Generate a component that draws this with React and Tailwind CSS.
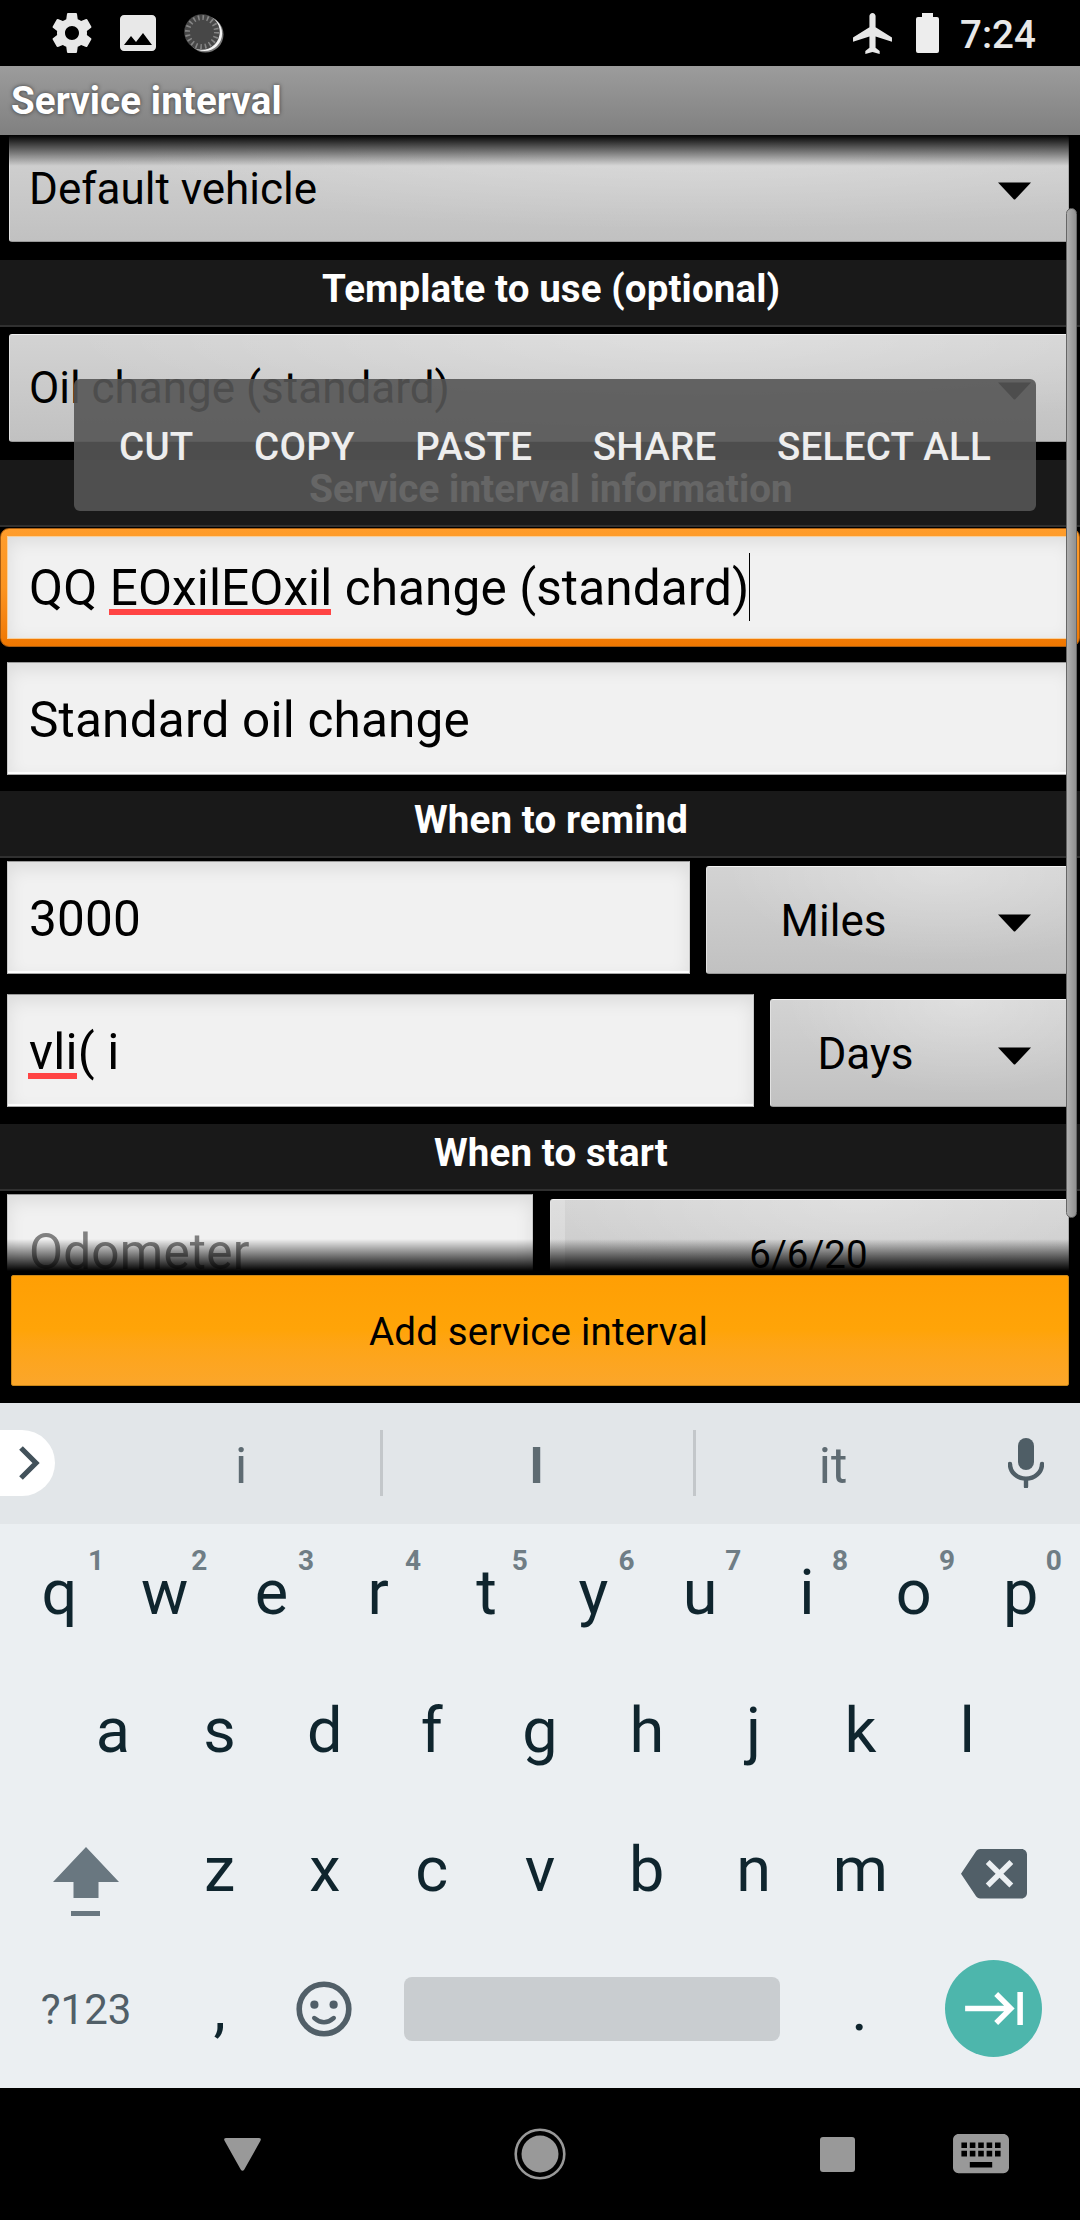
import React from "react";

const Arrow = () => (
  <svg width="33" height="18" viewBox="0 0 33 18" className="shrink-0">
    <path d="M0 0.5H33L17.5 17Q16.5 18 15.5 17Z" fill="#000" />
  </svg>
);

function StatusBar() {
  return (
    <div className="flex h-[66px] items-start bg-black pt-[13px] text-[#e8e8e8]">
      <svg width="40" height="40" viewBox="2 2 20 20" fill="currentColor" className="ml-[52px]">
        <path d="M19.43 12.98c.04-.32.07-.64.07-.98s-.03-.66-.07-.98l2.11-1.65c.19-.15.24-.42.12-.64l-2-3.46c-.12-.22-.39-.3-.61-.22l-2.49 1c-.52-.4-1.08-.73-1.69-.98l-.38-2.65C14.46 2.18 14.25 2 14 2h-4c-.25 0-.46.18-.49.42l-.38 2.65c-.61.25-1.17.59-1.69.98l-2.49-1c-.23-.09-.49 0-.61.22l-2 3.46c-.13.22-.07.49.12.64l2.11 1.65c-.04.32-.07.65-.07.98s.03.66.07.98l-2.11 1.65c-.19.15-.24.42-.12.64l2 3.46c.12.22.39.3.61.22l2.49-1c.52.4 1.08.73 1.69.98l.38 2.65c.03.24.24.42.49.42h4c.25 0 .46-.18.49-.42l.38-2.65c.61-.25 1.17-.59 1.69-.98l2.49 1c.23.09.49 0 .61-.22l2-3.46c.12-.22.07-.49-.12-.64l-2.11-1.65zM12 15.5c-1.93 0-3.5-1.57-3.5-3.5s1.57-3.5 3.5-3.5 3.5 1.57 3.5 3.5-1.57 3.5-3.5 3.5z" />
      </svg>
      <svg width="36" height="36" viewBox="3 3 18 18" fill="currentColor" className="mt-[2px] ml-[28px]">
        <path d="M21 19V5c0-1.1-.9-2-2-2H5c-1.1 0-2 .9-2 2v14c0 1.1.9 2 2 2h14c1.1 0 2-.9 2-2zM8.5 13.5l2.5 3.01L14.5 12l4.5 6H5l3.5-4.5z" />
      </svg>
      <svg width="40" height="40" viewBox="0 0 40 40" className="ml-[28px]">
        <circle cx="21.5" cy="21.5" r="18" fill="#777" />
        <circle cx="20.5" cy="20.5" r="17.6" fill="#f4f4f4" />
        <circle cx="18" cy="19" r="17.8" fill="#474747" />
        <circle cx="18" cy="19" r="14.5" fill="none" stroke="#858585" strokeWidth="5" strokeDasharray="1.6 2.955" />
      </svg>
      <svg width="39" height="41" viewBox="2 2 19 20" fill="currentColor" className="ml-auto">
        <path d="M21 16v-2l-8-5V3.5c0-.83-.67-1.5-1.5-1.5S10 2.67 10 3.5V9l-8 5v2l8-2.5V19l-2 1.5V22l3.5-1 3.5 1v-1.5L13 19v-5.5l8 2.5z" />
      </svg>
      <svg width="23" height="40" viewBox="0 0 23 40" fill="#ededed" className="ml-[24px]">
        <path d="M6 0H17V4H21Q23 4 23 6V38Q23 40 21 40H2Q0 40 0 38V6Q0 4 2 4H6Z" />
      </svg>
      <div className="mr-[42px] ml-[21px] w-[78px] text-[38.5px] leading-[44px] font-medium whitespace-nowrap">7:24</div>
    </div>
  );
}

const Header = ({ children, className = "" }) => (
  <div className={`h-[67px] shrink-0 border-b-2 border-[#303030] bg-[#191919] pl-[22px] text-center text-[38.5px] leading-[58px] font-bold tracking-[0.11px] text-white ${className}`}>
    {children}
  </div>
);

const Spinner = ({ children, className = "" }) => (
  <div className={`flex shrink-0 items-center rounded-[3px] border border-t-[#f2f2f2] border-r-[#aaa] border-b-[#999] border-l-[#e2e2e2] bg-[radial-gradient(ellipse_60%_90%_at_65%_0%,rgba(255,255,255,0.28),transparent),linear-gradient(#d3d3d3,#c1c1c1)] pr-[37px] text-[44px] leading-[52px] text-black ${className}`}>
    {children}
    <div className="pt-[5px]">
      <Arrow />
    </div>
  </div>
);

const Field = ({ children, className = "" }) => (
  <div className={`flex h-[113px] shrink-0 items-center border border-t-[#999] border-r-[#c8c8c8] border-b-[#aaa] border-l-[#c8c8c8] bg-[#f1f1f1] pt-[2px] pl-[21px] text-[49.5px] leading-[58px] tracking-[0.2px] whitespace-nowrap shadow-[inset_0_-2px_1px_#fff,inset_0_6px_18px_rgba(0,0,0,0.09)] ${className}`}>
    {children}
  </div>
);

const Misspelt = ({ children }) => (
  <span className="relative">
    {children}
    <span className="absolute bottom-[2px] left-[-1px] h-[6px] w-full bg-[#ff4444]" />
  </span>
);

function TextMenu() {
  return (
    <div className="absolute top-[244px] left-[74px] flex h-[132px] w-[962px] items-center gap-[60.5px] rounded-[6px] bg-[#555555]/90 pt-[3px] pl-[45px] text-[38.5px] leading-[46px] font-medium tracking-[0.25px] whitespace-nowrap text-white/90">
      <span>CUT</span>
      <span>COPY</span>
      <span>PASTE</span>
      <span>SHARE</span>
      <span>SELECT ALL</span>
    </div>
  );
}

function Form() {
  return (
    <div className="relative flex h-[1136px] flex-col overflow-hidden bg-black">
      <Spinner className="mr-[11px] ml-[9px] h-[107px]">
        <span className="flex-1 pl-[19px]">Default vehicle</span>
      </Spinner>
      <Header className="mt-[18px]">Template to use (optional)</Header>
      <Spinner className="mt-[7px] mr-[11px] ml-[9px] h-[108px]">
        <span className="flex-1 pl-[19px]">Oil change (standard)</span>
      </Spinner>
      <Header className="mt-[18px]">Service interval information</Header>
      <div className="mt-px h-[119px] shrink-0 rounded-[9px] border border-[#a85c10] bg-linear-to-b from-[#ff9d2c] via-[#fb9420] to-[#ef7700] px-[6px] py-[7px]">
        <div className="flex h-[103px] items-center border border-[#f8cf9a] bg-[#f1f1f1] pl-[21px] text-[49.5px] leading-[58px] tracking-[0.1px] whitespace-pre text-black shadow-[inset_0_4px_18px_rgba(0,0,0,0.09)]">
          <span>QQ </span>
          <Misspelt>EOxilEOxil</Misspelt>
          <span> change (standard)</span>
          <span className="-mt-px h-[68px] w-px bg-black" />
        </div>
      </div>
      <Field className="mt-[15px] mr-[7px] ml-[7px] text-black">Standard oil change</Field>
      <Header className="mt-[16px]">When to remind</Header>
      <div className="mt-[3px] flex shrink-0 items-end pr-[11px] pl-[7px]">
        <Field className="w-[683px] text-black">3000</Field>
        <Spinner className="ml-[16px] h-[108px] flex-1">
          <span className="flex-1 pt-[2px] pr-[38px] text-center">Miles</span>
        </Spinner>
      </div>
      <div className="mt-[20px] flex shrink-0 items-end pr-[11px] pl-[7px]">
        <Field className="w-[747px] text-black">
          <Misspelt>vli</Misspelt>
          <span className="whitespace-pre">( i</span>
        </Field>
        <Spinner className="ml-[16px] h-[108px] flex-1">
          <span className="flex-1 pt-[2px] pr-[38px] text-center">Days</span>
        </Spinner>
      </div>
      <Header className="mt-[17px]">When to start</Header>
      <div className="mt-[3px] flex shrink-0 items-end pr-[11px] pl-[7px]">
        <Field className="w-[526px] text-[#808080]">Odometer</Field>
        <div className="ml-[17px] flex h-[108px] flex-1 items-center justify-center rounded-[3px] border border-t-[#f2f2f2] border-r-[#aaa] border-b-[#999] border-l-[#e2e2e2] bg-[linear-gradient(90deg,rgba(255,255,255,0.22)_14px,transparent_14px),radial-gradient(ellipse_60%_90%_at_60%_0%,rgba(255,255,255,0.25),transparent),linear-gradient(#d5d5d5,#c4c4c4)] pt-[4px] pr-[2px] text-[38.5px] leading-[46px] text-black">
          6/6/20
        </div>
      </div>
      <div className="absolute inset-x-0 top-0 h-[31px] bg-linear-to-b from-black to-transparent" />
      <div className="absolute inset-x-0 bottom-0 h-[32px] bg-linear-to-b from-transparent to-black" />
      <div className="absolute top-[73px] right-[3px] h-[1010px] w-[11px] rounded-full border border-[#666] bg-linear-to-r from-[#b0b0b0] to-[#909090]" />
      <TextMenu />
    </div>
  );
}

function Suggestions() {
  return (
    <div className="flex h-[121px] items-center bg-[#e2e6e9] pb-[1px] text-[50px] leading-[58px] text-[#5e6b72]">
      <div className="flex h-[66px] w-[55px] items-center rounded-r-full bg-white pl-[19px]">
        <svg width="21" height="34" viewBox="0 0 21 34" fill="none" stroke="#42515a" strokeWidth="5.2">
          <path d="M2 2L17 17L2 32" />
        </svg>
      </div>
      <div className="ml-[47px] w-[278px] pt-[5px] text-center">i</div>
      <div className="h-[66px] w-[3px] bg-[#c3c7ca]" />
      <div className="w-[310px] pt-[5px] pr-[3px] text-center font-bold">I</div>
      <div className="h-[66px] w-[3px] bg-[#c3c7ca]" />
      <div className="w-[274px] pt-[5px] text-center">it</div>
      <svg width="36" height="50" viewBox="0 0 36 50" className="ml-[38px]">
        <rect x="10" y="0" width="16" height="32" rx="8" fill="#4f5e66" />
        <path d="M2 26a16 14.8 0 0 0 32 0M18 41V48.5" fill="none" stroke="#4f5e66" strokeWidth="4.4" strokeLinecap="round" />
      </svg>
    </div>
  );
}

const Key = ({ children, hint }) => (
  <div className={`relative h-full w-[106.8px] shrink-0 text-center ${"werdfxc".includes(children) ? "pr-[3px]" : ""}`}>
    {children}
    {hint && (
      <span className={`absolute top-[21px] text-[28px] leading-[32px] font-bold text-[#6f7d85] ${hint === "1" ? "left-[82px]" : "left-[78.5px]"}`}>
        {hint}
      </span>
    )}
  </div>
);

function Keyboard() {
  return (
    <div className="flex h-[564px] flex-col bg-[#ebeff2] px-[6px] text-[63px] leading-[138px] text-[#0f252e]">
      <div className="flex h-[138.3px]">
        {"qwertyuiop".split("").map((c, i) => (
          <Key key={c} hint={String((i + 1) % 10)}>{c}</Key>
        ))}
      </div>
      <div className="flex h-[138.3px] px-[53.4px]">
        {"asdfghjkl".split("").map((c) => (
          <Key key={c}>{c}</Key>
        ))}
      </div>
      <div className="flex h-[138.3px] items-center">
        <div className="flex w-[160.2px] justify-center">
          <svg width="66" height="70" viewBox="0 0 66 70" fill="#697780" className="mt-[25px]">
            <path d="M33 0L66 35H45.5V51H20.5V35H0Z" />
            <rect x="18" y="64" width="29" height="5" />
          </svg>
        </div>
        {"zxcvbnm".split("").map((c) => (
          <Key key={c}>{c}</Key>
        ))}
        <div className="flex w-[160.2px] justify-center">
          <svg width="66" height="49.5" viewBox="0 3 24 18" fill="#515f68" className="mt-[9px]">
            <path d="M22 3H7c-.69 0-1.23.35-1.59.88L0 12l5.41 8.11c.36.53.9.89 1.59.89h15c1.1 0 2-.9 2-2V5c0-1.1-.9-2-2-2zm-3 12.59L17.59 17 14 13.41 10.41 17 9 15.59 12.59 12 9 8.41 10.41 7 14 10.59 17.59 7 19 8.41 15.41 12 19 15.59z" />
          </svg>
        </div>
      </div>
      <div className="flex h-[138.3px] items-center pt-[1px]">
        <div className="w-[160.2px] pt-[2px] text-center text-[42px] text-[#515f68]">?123</div>
        <div className="w-[106.8px] text-center">,</div>
        <div className="flex w-[106.8px] justify-center pr-[4px]">
          <svg width="56" height="56" viewBox="-28 -28 56 56" fill="none" stroke="#515f68">
            <circle r="24.8" strokeWidth="5.6" />
            <circle cx="-9.6" cy="-4.3" r="4.1" fill="#515f68" stroke="none" />
            <circle cx="9.6" cy="-4.3" r="4.1" fill="#515f68" stroke="none" />
            <path d="M-9.8 9Q0 17.5 9.8 9" strokeWidth="4.4" strokeLinecap="round" />
          </svg>
        </div>
        <div className="ml-[24px] h-[64px] w-[376px] rounded-[8px] bg-[#c9cdd0]" />
        <div className="ml-[26.5px] w-[106.8px] text-center">.</div>
        <div className="flex flex-1 justify-center">
          <div className="flex size-[97px] items-center justify-center rounded-full bg-[#4db6ac]">
            <svg width="58" height="33" viewBox="1 6 21 12" fill="#fff">
              <path d="M11.59 7.41L15.17 11H1v2h14.17l-3.59 3.59L13 18l6-6-6-6-1.41 1.41zM20 6v12h2V6h-2z" />
            </svg>
          </div>
        </div>
      </div>
    </div>
  );
}

function NavBar() {
  return (
    <div className="flex h-[132px] items-center bg-black text-[#999]">
      <svg width="37" height="33" viewBox="0 0 37 33" fill="currentColor" className="ml-[223.5px]">
        <path d="M2.5 0H34.5Q38 0 36.3 3L20.3 31.5Q18.5 34 16.7 31.5L.7 3Q-1 0 2.5 0Z" />
      </svg>
      <svg width="52" height="52" viewBox="-26 -26 52 52" className="ml-[253.5px]">
        <circle r="24.3" fill="none" stroke="currentColor" strokeWidth="2.6" />
        <circle r="18.5" fill="currentColor" />
      </svg>
      <div className="ml-[253.5px] size-[35px] rounded-[3px] bg-[#999]" />
      <svg width="56" height="39.2" viewBox="2 5 20 14" fill="currentColor" className="ml-[98.5px]">
        <path d="M20 5H4c-1.1 0-1.99.9-1.99 2L2 17c0 1.1.9 2 2 2h16c1.1 0 2-.9 2-2V7c0-1.1-.9-2-2-2zm-9 3h2v2h-2V8zm0 3h2v2h-2v-2zM8 8h2v2H8V8zm0 3h2v2H8v-2zm-1 2H5v-2h2v2zm0-3H5V8h2v2zm9 7H8v-2h8v2zm0-4h-2v-2h2v2zm0-3h-2V8h2v2zm3 3h-2v-2h2v2zm0-3h-2V8h2v2z" />
      </svg>
    </div>
  );
}

export default function App() {
  return (
    <div className="h-[2220px] w-[1080px] overflow-hidden bg-black font-['Roboto',sans-serif]">
      <StatusBar />
      <div className="h-[69px] bg-linear-to-b from-[#9c9c9c] to-[#808080] pl-[11px] text-[38.5px] leading-[69px] font-bold tracking-[0.1px] text-white [text-shadow:0_0_4px_rgba(0,0,0,0.6)]">
        Service interval
      </div>
      <Form />
      <div className="h-[132px] bg-black px-[11px] pt-[4px]">
        <div className="h-[111px] rounded-[2px] border border-[#c98618] bg-linear-to-b from-[#ff9f04] via-[#ffa408] to-[#fba62a] pr-[3px] text-center text-[38.5px] leading-[111px] tracking-[0.17px] text-black">
          Add service interval
        </div>
      </div>
      <Suggestions />
      <Keyboard />
      <NavBar />
    </div>
  );
}
